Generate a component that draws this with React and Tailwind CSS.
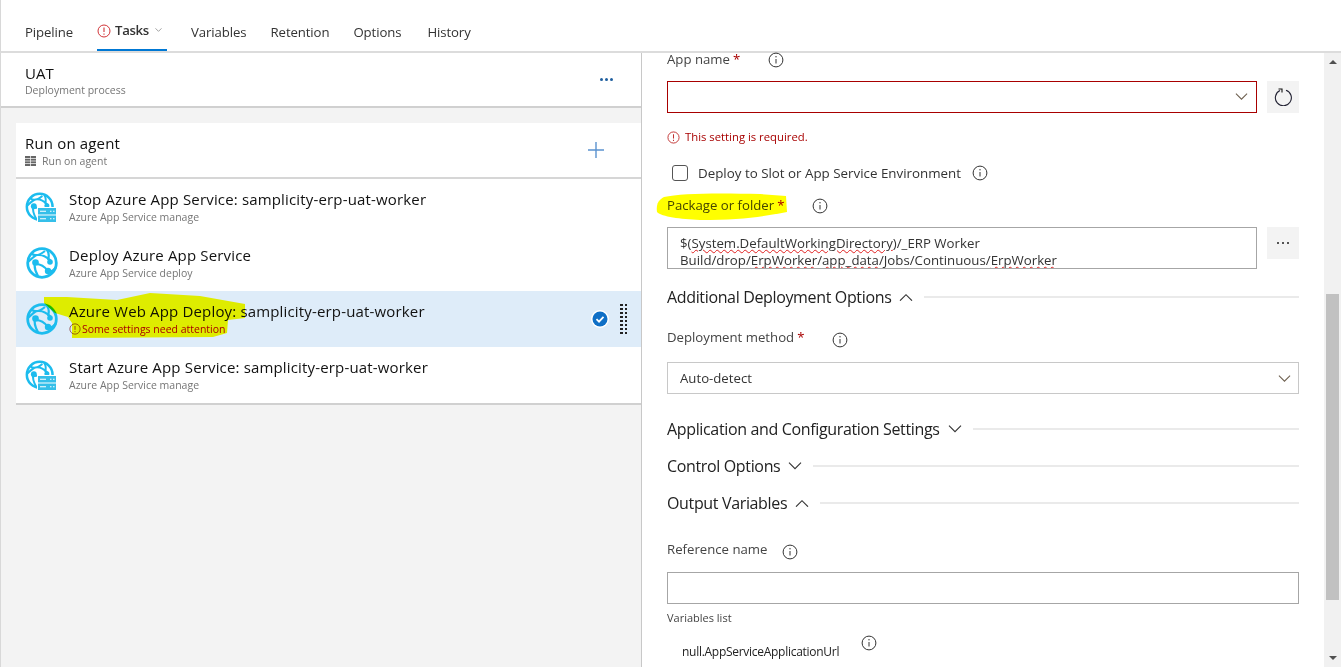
import React from "react";

const GlobeArt = () => (
  <g>
    <circle cx="18" cy="18" r="14.300" stroke="#1cbcee" strokeWidth="2.800" />
    <path d="M8 9c3 2 8 1 13-3M4 17c3-3 6-6 9-7M13 10c5-1 11 3 14 6M11 17c-1 4 0 9 3 14M12 19c4 0 9 3 12 7M24 15c1-3 1-7-1-10M26 27c2-1 5-3 6-5" stroke="#1cbcee" strokeWidth="2.200" />
    <circle cx="11.500" cy="17.500" r="3.300" fill="#1cbcee" />
    <circle cx="26" cy="17" r="2.800" fill="#1cbcee" />
    <circle cx="24" cy="26" r="3.200" fill="#1cbcee" />
  </g>
);

const Globe = ({ small }) => (
  <svg width="36" height="36" viewBox="0 0 36 36" className="shrink-0" fill="none">
    {small ? (
      <g>
        <g transform="translate(-0.500 1.500) scale(0.900)">
          <GlobeArt />
        </g>
        <rect x="13" y="18" width="20" height="16" fill="#fff" />
        <rect x="14" y="19" width="18" height="6.500" fill="#35bfe9" />
        <rect x="14" y="26.500" width="18" height="6.500" fill="#35bfe9" />
        <path d="M16 22.300h6M16 29.800h6M26 22.300h1.500M29 22.300h1.500M26 29.800h1.500M29 29.800h1.500" stroke="#fff" strokeWidth="1.100" />
      </g>
    ) : (
      <GlobeArt />
    )}
  </svg>
);

const Info = () => (
  <svg width="16" height="16" viewBox="0 0 16 16" fill="none" className="shrink-0">
    <circle cx="8" cy="8" r="6.900" stroke="#333" strokeWidth="1" />
    <path d="M8 7v4.500" stroke="#333" strokeWidth="1" />
    <circle cx="8" cy="4.800" r="0.700" fill="#333" />
  </svg>
);

const Alert = ({ size = 14, color = "#a80000" }) => (
  <svg width={size} height={size} viewBox="0 0 14 14" fill="none" className="shrink-0">
    <circle cx="7" cy="7" r="6" stroke={color} strokeWidth="1" />
    <path d="M7 3.500v4.500M7 9.500v1.200" stroke={color} strokeWidth="1.100" />
  </svg>
);

const Chev = ({ up, w = 14, color = "#333" }) => (
  <svg width={w} height={w * 0.6} viewBox="0 0 14 8" fill="none" className="shrink-0">
    <path d={up ? "M1 7.500 7 1.500l6 6" : "M1 .5l6 6 6-6"} stroke={color} strokeWidth="1.100" />
  </svg>
);

const Req = () => <span className="ml-[3px] text-[#a80000]">*</span>;

const Section = ({ title, up, className }) => (
  <div className={`flex items-center h-[22px] ${className}`}>
    <span className="text-[16px] leading-[22px] text-[#222] tracking-[-0.35px] whitespace-nowrap">{title}</span>
    <span className="ml-2 mr-[11px]"><Chev up={up} /></span>
    <div className="flex-1 h-[2px] bg-[#eaeaea]" />
  </div>
);

const Row = ({ title, sub, small, selected, warn }) => (
  <div className={`relative flex items-center h-[56px] pl-2 ${selected ? "bg-[#deecf9]" : "bg-white"}`}>
    <Globe small={small} />
    <div className="ml-[9px] -mt-[1px]">
      <div className="text-[15px] leading-[20px] text-[#111] tracking-[0.16px] whitespace-nowrap">{title}</div>
      {warn ? (
        <div className="flex items-center mt-[1px] text-[10.500px] leading-[14px] text-[#a80000] whitespace-nowrap">
          <Alert size={12} color="#8a4a4a" />
          <span className="ml-[1px]">{sub}</span>
        </div>
      ) : (
        <div className="mt-[1px] text-[10.500px] leading-[14px] text-[#767676] whitespace-nowrap">{sub}</div>
      )}
    </div>
    {selected && (
      <div className="ml-auto mr-[14px] flex items-center gap-[11px]">
        <svg width="18" height="18" viewBox="0 0 18 18">
          <circle cx="9" cy="9" r="9" fill="#fff" />
          <circle cx="9" cy="9" r="7.500" fill="#0f6fc6" />
          <path d="M5.500 9.200l2.500 2.400 4.500-4.800" stroke="#fff" strokeWidth="1.800" fill="none" />
        </svg>
        <div className="grid grid-cols-2 gap-x-[2px] gap-y-[2px]">
          {Array.from({ length: 16 }).map((_, i) => (
            <span key={i} className="w-[2.500px] h-[2px] bg-[#222]" />
          ))}
        </div>
      </div>
    )}
  </div>
);

const Tab = ({ children, className = "" }) => (
  <span className={`text-[13.200px] leading-[20px] text-[#333] tracking-[-0.1px] self-center ${className}`}>{children}</span>
);

const Sq = ({ children }) => (
  <span className="underline decoration-wavy decoration-[#e02020] decoration-1 underline-offset-1">{children}</span>
);

const Label = ({ children, className }) => (
  <div className={`flex items-center h-[20px] text-[13.200px] text-[#444] whitespace-nowrap ${className}`}>{children}</div>
);

export default function App() {
  return (
    <div
      className="relative flex flex-col w-[1341px] h-[667px] overflow-hidden bg-white"
      style={{ fontFamily: '"Open Sans", "Noto Sans", sans-serif' }}
    >
      <div className="flex items-stretch h-[53px] shrink-0 border-b-2 border-[#dcdcdc] pt-[12px] pl-[24px] gap-[24px] border-l border-l-[#d8d8d8]">
        <Tab>Pipeline</Tab>
        <div className="relative flex items-center pb-[2px] w-[70px]">
          <Alert size={14} color="#d13438" />
          <span className="ml-[4px] text-[13.200px] font-semibold text-[#333] tracking-[-0.35px]">Tasks</span>
          <span className="ml-[6px]"><Chev w={7} color="#555" /></span>
          <span className="absolute left-0 right-0 bottom-0 h-[2px] bg-[#0078d4]" />
        </div>
        <Tab>Variables</Tab>
        <Tab>Retention</Tab>
        <Tab>Options</Tab>
        <Tab className="ml-[2px]">History</Tab>
      </div>

      <div className="flex flex-1 min-h-0">
        <div className="flex flex-col w-[642px] shrink-0 border-r border-[#c8c8c8] border-l border-l-[#d8d8d8]">
          <div className="flex items-center justify-between h-[55px] shrink-0 border-b-2 border-[#d0d0d0] pt-[3px] pl-[24px] pr-[28px] bg-white">
            <div>
              <div className="text-[15px] leading-[18px] text-[#111]">UAT</div>
              <div className="mt-[1px] text-[10.500px] leading-[15px] text-[#767676]">Deployment process</div>
            </div>
            <div className="flex gap-[2px] -mt-[3px]">
              <span className="w-[3px] h-[3px] bg-[#1f5f9f] rounded-full" />
              <span className="w-[3px] h-[3px] bg-[#1f5f9f] rounded-full" />
              <span className="w-[3px] h-[3px] bg-[#1f5f9f] rounded-full" />
            </div>
          </div>
          <div className="flex-1 bg-[#f3f3f3] pt-[15px] pl-[15px]">
            <div className="bg-white border-b-2 border-[#d0d0d0]">
              <div className="flex items-center justify-between h-[56px] border-b-2 border-[#d6d6d6] pl-[9px] pr-[37px]">
                <div>
                  <div className="text-[15px] leading-[20px] text-[#111] tracking-[0.16px]">Run on agent</div>
                  <div className="flex items-center mt-[1px] text-[10.500px] leading-[14px] text-[#767676]">
                    <svg width="11" height="10" viewBox="0 0 11 10" className="mr-[6px]">
                      <rect width="11" height="10" fill="#666" />
                      <path d="M0 2.500h11M0 5h11M0 7.500h11M5.500 0v10" stroke="#fff" strokeWidth="0.700" />
                    </svg>
                    Run on agent
                  </div>
                </div>
                <svg width="16" height="16" viewBox="0 0 16 16">
                  <path d="M8 0v16M0 8h16" stroke="#5b93cf" strokeWidth="1.400" />
                </svg>
              </div>
              <Row small title="Stop Azure App Service: samplicity-erp-uat-worker" sub="Azure App Service manage" />
              <Row title="Deploy Azure App Service" sub="Azure App Service deploy" />
              <Row selected warn title="Azure Web App Deploy: samplicity-erp-uat-worker" sub="Some settings need attention" />
              <Row small title="Start Azure App Service: samplicity-erp-uat-worker" sub="Azure App Service manage" />
            </div>
          </div>
        </div>

        <div className="flex-1 min-w-0 pl-[25px] pr-[25px]">
          <Label className="mt-[-3px]"><span>App name</span><Req /><span className="ml-[28px]"><Info /></span></Label>
          <div className="flex gap-[10px] mt-[11px]">
            <div className="flex-1 h-[32px] border border-[#a80000] flex items-center justify-end pr-[8px]">
              <Chev color="#6d5f4f" w={13} />
            </div>
            <div className="w-[32px] h-[32px] bg-[#f3f3f3] flex items-center justify-center">
              <svg width="18" height="18" viewBox="0 0 18 18" fill="none">
                <path d="M6 2.500A8 8 0 1 0 12 2.200" stroke="#223" strokeWidth="1.100" />
                <path d="M4.500 1h3.500v3.500" stroke="#111" strokeWidth="1.100" />
              </svg>
            </div>
          </div>
          <div className="flex items-center mt-[16px] h-[16px] text-[11.300px] text-[#a80000] gap-[5px]">
            <Alert size={13} color="#c03030" />
            <span>This setting is required.</span>
          </div>
          <div className="flex items-center mt-[18px] ml-[5px] h-[20px]">
            <span className="w-[16px] h-[16px] rounded-[3px] border border-[#555] shrink-0" />
            <span className="ml-[10px] text-[13.350px] text-[#333] whitespace-nowrap">Deploy to Slot or App Service Environment</span>
            <span className="ml-[11px]"><Info /></span>
          </div>
          <Label className="mt-[13px] text-[#333]"><span>Package or folder</span><Req /><span className="ml-[28px]"><Info /></span></Label>
          <div className="flex gap-[10px] mt-[11px]">
            <div className="flex-1 h-[42px] border border-[#a6a6a6] pl-[12px] pt-[7px] text-[13.250px] leading-[17px] text-[#333] whitespace-nowrap overflow-hidden">
              <div>$(<Sq>System.DefaultWorkingDirectory</Sq>)/_ERP Worker</div>
              <div>Build/drop/<Sq>ErpWorker</Sq>/<Sq>app_data</Sq>/Jobs/Continuous/<Sq>ErpWorker</Sq></div>
            </div>
            <div className="w-[32px] h-[32px] bg-[#f3f3f3] flex items-center justify-center gap-[3px]">
              <span className="w-[2px] h-[2px] bg-[#555]" />
              <span className="w-[2px] h-[2px] bg-[#555]" />
              <span className="w-[2px] h-[2px] bg-[#555]" />
            </div>
          </div>
          <Section title="Additional Deployment Options" up className="mt-[17px]" />
          <Label className="mt-[20px]"><span>Deployment method</span><Req /><span className="ml-[28px] mt-[4px]"><Info /></span></Label>
          <div className="mt-[14px] h-[32px] border border-[#c8c8c8] flex items-center justify-between pl-[12px] pr-[7px] pt-[1px] text-[13.200px] text-[#333]">
            <span>Auto-detect</span>
            <Chev color="#6d5f4f" w={13} />
          </div>
          <Section title="Application and Configuration Settings" className="mt-[24px]" />
          <Section title="Control Options" className="mt-[15px]" />
          <Section title="Output Variables" up className="mt-[15px]" />
          <Label className="mt-[26px]"><span>Reference name</span><span className="ml-[15px] mt-[3px]"><Info /></span></Label>
          <div className="mt-[12px] h-[32px] border border-[#a6a6a6]" />
          <div className="mt-[6px] text-[11px] leading-[16px] text-[#444]">Variables list</div>
          <div className="flex ml-[15px] mt-[9px] h-[30px] text-[12px] tracking-[-0.28px] text-[#222]">
            <span className="mt-[8px]">null.AppServiceApplicationUrl</span>
            <span className="ml-[22px]"><Info /></span>
          </div>
        </div>

        <div className="relative w-[17px] shrink-0 bg-[#f1f1f1]">
          <span className="absolute left-[5px] top-[7px] w-0 h-0 border-x-[4px] border-x-transparent border-b-[4px] border-b-[#505050]" />
          <div className="absolute left-[2px] right-[2px] top-[241px] h-[306px] bg-[#c1c1c1]" />
          <span className="absolute left-[5px] bottom-[7px] w-0 h-0 border-x-[4px] border-x-transparent border-t-[4px] border-t-[#505050]" />
        </div>
      </div>

      <svg className="absolute inset-0 pointer-events-none mix-blend-multiply" width="1341" height="667" viewBox="0 0 1341 667">
        <path d="M44 297L67 297L117 300L150 293L200 296L245 304L245 318L228 320L227 333L213 337L72 338L72 323L68 317L55 313L44 303Z" fill="#ffff00" />
        <path d="M664 197C680 193 720 193 760 194L786 196L787 212C760 217 740 220 700 220C680 219 662 217 657 212C656 205 658 200 664 197Z" fill="#ffff00" />
      </svg>
    </div>
  );
}
